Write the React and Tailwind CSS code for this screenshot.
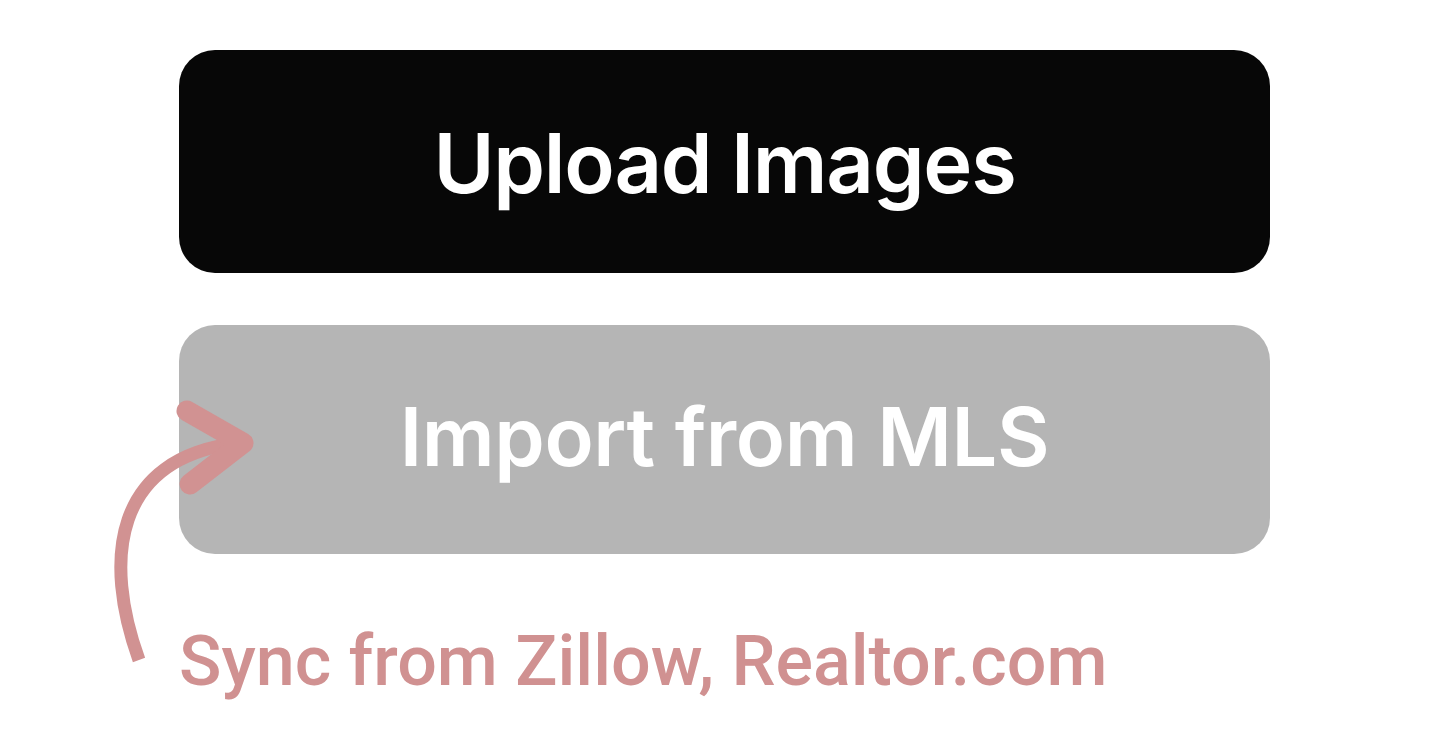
export default function App() {
  return (
    <div className="relative w-[1449px] h-[737px] bg-white overflow-hidden" style={{ fontFamily: "Inter, 'Noto Sans', sans-serif" }}>
      <div className="flex flex-col pt-[50px] pl-[179px] w-[1270px]">
        <div className="w-[1091px] h-[223px] rounded-[36px] bg-[#070707] flex items-center justify-center">
          <span className="text-white text-[83px] font-semibold leading-none tracking-[-0.015em] mt-[4px]">Upload Images</span>
        </div>
        <div className="mt-[52px] w-[1091px] h-[229px] rounded-[36px] bg-[#b5b5b5] flex items-center justify-center">
          <span className="text-white text-[81px] font-semibold leading-none tracking-[-0.005em] mt-[-4px]">Import from MLS</span>
        </div>
        <div className="mt-[72px] text-[#d09191] text-[70px] font-medium leading-none" style={{ fontFamily: "Roboto, 'Liberation Sans', sans-serif" }}>
          Sync from Zillow, Realtor.com
        </div>
      </div>
      <svg className="absolute left-0 top-0" width="1449" height="737" viewBox="0 0 1449 737" fill="none">
        <path d="M139 660 C 103 560, 113 458, 238 443" stroke="#d19292" strokeWidth="13" strokeLinecap="butt" fill="none" />
        <path d="M187 411 L 243 443 L 190 484" stroke="#d19292" strokeWidth="21" strokeLinecap="round" strokeLinejoin="round" fill="none" />
      </svg>
    </div>
  );
}
